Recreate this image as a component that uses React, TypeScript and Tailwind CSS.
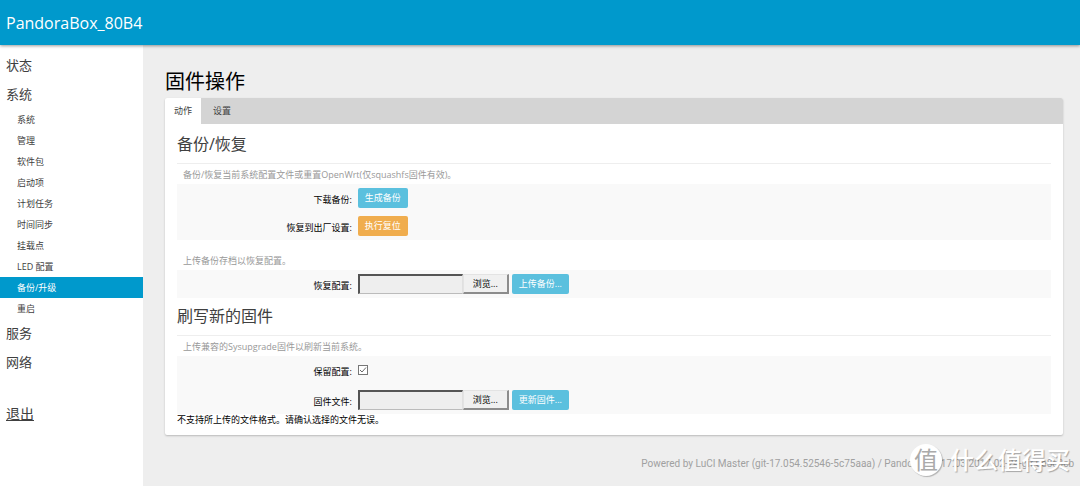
import React from 'react';

const systemItems = ['系统', '管理', '软件包', '启动项', '计划任务', '时间同步', '挂载点', 'LED 配置', '备份/升级', '重启'];

function SectionLink({ label }: { label: string }) {
  return (
    <a href="#" className="block px-1.5 text-[13px] leading-[29px]">
      {label}
    </a>
  );
}

function SectionTitle({ children }: { children: React.ReactNode }) {
  return <h3 className="h-[38px] border-b border-[#eeeeee] text-[16px] leading-[36px] text-[#404040]">{children}</h3>;
}

function Description({ children }: { children: React.ReactNode }) {
  return <p className="px-1.5 pt-[3px] pb-px text-[9px] leading-4 text-[#999999]">{children}</p>;
}

function Row({ id, label, children }: { id: string; label: string; children: React.ReactNode }) {
  return (
    <div className="flex h-7 items-center gap-1.5">
      <label htmlFor={id} className="w-1/5 pt-1 text-right text-[9px]">
        {label}
      </label>
      <div className="flex items-center">{children}</div>
    </div>
  );
}

function ActionButton({ id, tone, children }: { id?: string; tone: 'info' | 'warning'; children: React.ReactNode }) {
  const color = tone === 'info' ? 'bg-[#5bc0de]' : 'bg-[#f0ad4e]';
  return (
    <button id={id} type="button" className={`h-5 rounded-xs px-[7px] text-[9px] leading-5 whitespace-nowrap text-white ${color}`}>
      {children}
    </button>
  );
}

function FilePicker({ id, submit }: { id: string; submit: string }) {
  return (
    <>
      <input
        id={id}
        type="text"
        readOnly
        className="h-5 w-[105px] border-t-2 border-r border-b border-l-2 border-t-[#555555] border-r-[#e0e0e0] border-b-[#bbbbbb] border-l-[#555555] bg-[#eeeeee]"
      />
      <button
        type="button"
        className="mr-[3px] h-5 w-[46px] border-t border-r-2 border-b-2 border-l border-t-[#e3e3e3] border-r-[#8c8c8c] border-b-[#8c8c8c] border-l-[#e3e3e3] bg-[#f0f0f0] text-[9px] leading-4"
      >
        浏览...
      </button>
      <ActionButton tone="info">{submit}</ActionButton>
    </>
  );
}

export default function App() {
  return (
    <div className="relative flex min-h-screen flex-col bg-[#eeeeee] font-['Open_Sans','Noto_Sans_CJK_SC',sans-serif] text-black">
      <header className="z-10 flex h-[45px] items-center bg-[#0099cc] px-1.5 shadow-[0_1px_3px_rgba(0,0,0,0.4)]">
        <a href="#" className="text-[16px] text-white">
          PandoraBox_80B4
        </a>
      </header>

      <div className="flex grow">
        <nav className="w-[143px] shrink-0 bg-white pt-1.5 text-[#404040]">
          <SectionLink label="状态" />
          <SectionLink label="系统" />
          <ul>
            {systemItems.map((item) => (
              <li key={item}>
                <a
                  href="#"
                  className={`block pl-[17px] text-[9px] leading-[21px] ${item === '备份/升级' ? 'bg-[#0099cc] text-white' : ''}`}
                >
                  {item}
                </a>
              </li>
            ))}
          </ul>
          <SectionLink label="服务" />
          <SectionLink label="网络" />
          <a href="#" className="mt-[22px] block px-1.5 text-[14px] leading-[29px] underline">
            退出
          </a>
        </nav>

        <div className="flex grow flex-col pr-[17px] pl-[22px]">
          <main>
            <h2 className="pt-[21px] text-[20px] leading-8">固件操作</h2>
            <div className="rounded-xs bg-white shadow-[0_1px_2px_rgba(0,0,0,0.22)]">
              <ul className="flex h-[26px] rounded-t-xs bg-[#d4d4d4] text-[9px] leading-[26px] text-[#404040]">
                <li className="rounded-tl-xs bg-white">
                  <a href="#" className="block px-[9px]">
                    动作
                  </a>
                </li>
                <li>
                  <a href="#" className="block px-3">
                    设置
                  </a>
                </li>
              </ul>

              <div className="px-3 pt-0.5 pb-[9px]">
                <SectionTitle>备份/恢复</SectionTitle>
                <Description>备份/恢复当前系统配置文件或重置OpenWrt(仅squashfs固件有效)。</Description>
                <div className="bg-[#f9f9f9]">
                  <Row id="backup" label="下载备份:">
                    <ActionButton id="backup" tone="info">生成备份</ActionButton>
                  </Row>
                  <Row id="reset" label="恢复到出厂设置:">
                    <ActionButton id="reset" tone="warning">执行复位</ActionButton>
                  </Row>
                </div>

                <div className="pt-2.5">
                  <Description>上传备份存档以恢复配置。</Description>
                </div>
                <div className="bg-[#f9f9f9]">
                  <Row id="archive" label="恢复配置:">
                    <FilePicker id="archive" submit="上传备份..." />
                  </Row>
                </div>

                <SectionTitle>刷写新的固件</SectionTitle>
                <Description>上传兼容的Sysupgrade固件以刷新当前系统。</Description>
                <div className="flex flex-col gap-0.5 bg-[#f9f9f9]">
                  <Row id="keep" label="保留配置:">
                    <span className="relative flex">
                      <input
                        id="keep"
                        type="checkbox"
                        defaultChecked
                        className="peer size-[10px] appearance-none border border-[#777777] bg-white"
                      />
                      <svg
                        viewBox="0 0 10 10"
                        className="pointer-events-none absolute inset-0 hidden size-[10px] fill-none stroke-[#444444] peer-checked:block"
                      >
                        <path d="M2 5l2 2 4-4.5" strokeWidth="0.8" />
                      </svg>
                    </span>
                  </Row>
                  <Row id="image" label="固件文件:">
                    <FilePicker id="image" submit="更新固件..." />
                  </Row>
                </div>
                <p className="text-[9px] leading-3">不支持所上传的文件格式。请确认选择的文件无误。</p>
              </div>
            </div>
          </main>
        </div>
      </div>

      <footer className="absolute right-1.5 bottom-[15px] font-['Roboto',sans-serif] text-[10px] leading-[14px] text-[#a0a0a0]">
        <a href="#">Powered by LuCI Master (git-17.054.52546-5c75aaa)</a> / PandoraBox 17.03 2017-02-24-git-0e8c3cb
      </footer>

      <div className="absolute right-[10px] bottom-[10px] flex items-center gap-2 text-white">
        <span className="flex size-8 items-center justify-center rounded-full bg-white text-[24px] leading-8 text-[#aaaaaa] shadow-[1px_1px_1px_rgba(0,0,0,0.25)]">
          值
        </span>
        <span className="text-[24px] leading-8 font-medium [text-shadow:1px_1px_1px_rgba(0,0,0,0.3)]">什么值得买</span>
      </div>
    </div>
  );
}
